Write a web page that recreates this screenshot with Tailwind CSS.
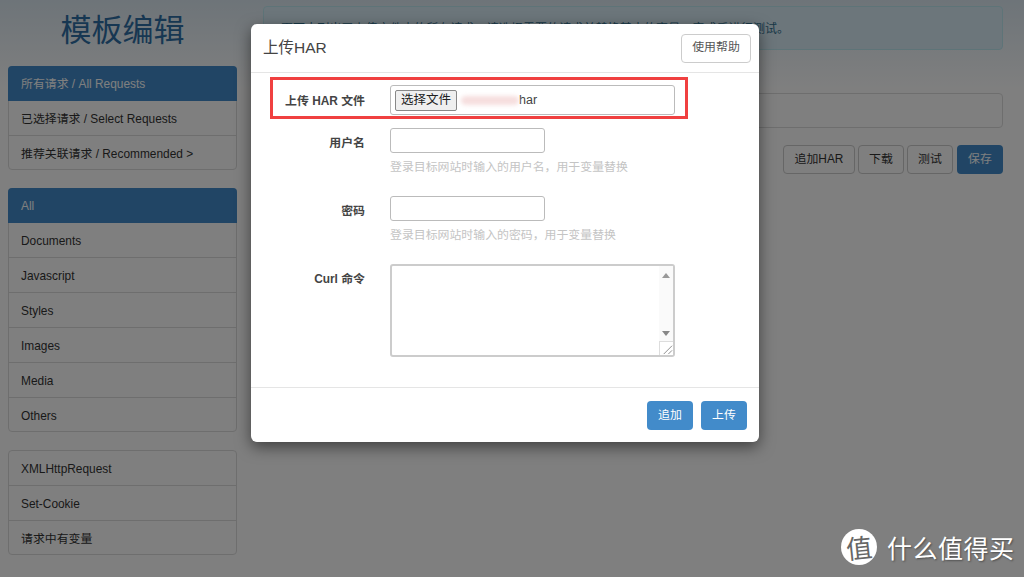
<!DOCTYPE html>
<html lang="zh">
<head>
    <meta charset="UTF-8">
    <title>模板编辑</title>
    <script src="https://cdn.jsdelivr.net/npm/@tailwindcss/browser@4"></script>
</head>
<body class="relative w-[1024px] h-[577px] overflow-hidden bg-white text-[#333] text-[11.9px] font-['Liberation_Sans','Noto_Sans_CJK_SC',sans-serif]">

<!-- page behind the dialog -->
<div class="flex gap-[26px] pl-2 pr-[21px] h-full bg-gradient-to-b from-[#dce9f2] to-white to-[90px]">
    <div class="w-[229px] shrink-0">
        <h1 class="h-[66px] pt-[9px] text-center text-[31px] leading-[44px] text-[#2f6ea5]">模板编辑</h1>
        <div class="flex flex-col border border-[#ddd] rounded bg-white mb-[18px]">
            <a class="h-[35px] -m-px mb-0 px-[13px] leading-[36px] rounded-t bg-[#428bca] text-white">所有请求 / All Requests</a>
            <a class="h-[35px] px-3 leading-[36px] border-b border-[#ddd]">已选择请求 / Select Requests</a>
            <a class="h-[33px] px-3 leading-[36px]">推荐关联请求 / Recommended &gt;</a>
        </div>
        <div class="flex flex-col border border-[#ddd] rounded bg-white mb-[18px]">
            <a class="h-[35px] -m-px mb-0 px-[13px] leading-[36px] rounded-t bg-[#428bca] text-white">All</a>
            <a class="h-[35px] px-3 leading-[36px] border-b border-[#ddd]">Documents</a>
            <a class="h-[35px] px-3 leading-[36px] border-b border-[#ddd]">Javascript</a>
            <a class="h-[35px] px-3 leading-[36px] border-b border-[#ddd]">Styles</a>
            <a class="h-[35px] px-3 leading-[36px] border-b border-[#ddd]">Images</a>
            <a class="h-[35px] px-3 leading-[36px] border-b border-[#ddd]">Media</a>
            <a class="h-[33px] px-3 leading-[36px]">Others</a>
        </div>
        <div class="flex flex-col border border-[#ddd] rounded bg-white">
            <a class="h-[35px] px-3 leading-[36px] border-b border-[#ddd]">XMLHttpRequest</a>
            <a class="h-[35px] px-3 leading-[36px] border-b border-[#ddd]">Set-Cookie</a>
            <a class="h-[33px] px-3 leading-[36px]">请求中有变量</a>
        </div>
    </div>
    <div class="flex-1 pt-[6px]">
        <div class="h-11 pl-[17px] border border-[#bce8f1] rounded bg-[#d9edf7] text-[#31708f] text-xs tracking-[0.1px] leading-[44px] whitespace-nowrap">页面中列出了上传文件内的所有请求，请选择需要的请求并替换其中的变量，完成后进行测试。</div>
        <div class="h-[35px] mt-[43px] border border-[#ddd] rounded bg-white"></div>
        <div class="flex justify-end gap-[3px] mt-[17px]">
            <button class="h-[29px] w-[72px] border border-[#ccc] rounded bg-white">追加HAR</button>
            <button class="h-[29px] w-[46px] border border-[#ccc] rounded bg-white">下载</button>
            <button class="h-[29px] w-[46px] border border-[#ccc] rounded bg-white">测试</button>
            <button class="h-[29px] w-[46px] ml-px rounded bg-[#428bca] text-white">保存</button>
        </div>
    </div>
</div>

<!-- backdrop -->
<div class="absolute inset-0 bg-[rgba(0,0,0,0.5)]"></div>

<!-- modal -->
<div class="absolute left-[251px] top-[24px] w-[508px] h-[418px] flex flex-col bg-white rounded-md shadow-[0_5px_15px_rgba(0,0,0,0.5)]">
    <div class="h-[49px] shrink-0 flex items-center justify-between pl-3 pr-2 border-b border-[#e5e5e5]">
        <h4 class="text-[15.5px] text-[#444]">上传HAR</h4>
        <button class="w-[70px] h-[29px] border border-[#ccc] rounded bg-white text-[#555]">使用帮助</button>
    </div>
    <div class="flex-1 relative pt-3 pl-[34px]">
        <div class="flex items-start h-[43px]">
            <label class="w-20 text-right font-bold leading-[32px] whitespace-nowrap text-[#444]">上传 HAR 文件</label>
            <div class="ml-[25px] w-[285px] h-[30px] flex items-center px-1 border border-[#bbb] rounded-[3px] text-[12.5px]">
                <span class="w-[62px] h-[21px] flex items-center justify-center border border-[#888] rounded-[2px] bg-[#efefef] text-[#222]">选择文件</span>
                <span class="w-[58px] h-[9px] ml-[4px] rounded-full bg-[#f6dede] blur-[2px]"></span>
                <span class="text-[#444]">har</span>
            </div>
        </div>
        <div class="flex items-start h-[68px]">
            <label class="w-20 text-right font-bold leading-[30px] text-[#444]">用户名</label>
            <div class="ml-[25px]">
                <div class="w-[155px] h-[25px] border border-[#bbb] rounded-[3px]"></div>
                <p class="mt-[6px] leading-[16px] text-[#c4c4c4]">登录目标网站时输入的用户名，用于变量替换</p>
            </div>
        </div>
        <div class="flex items-start h-[68px]">
            <label class="w-20 text-right font-bold leading-[30px] text-[#444]">密码</label>
            <div class="ml-[25px]">
                <div class="w-[155px] h-[25px] border border-[#bbb] rounded-[3px]"></div>
                <p class="mt-[6px] leading-[16px] text-[#c4c4c4]">登录目标网站时输入的密码，用于变量替换</p>
            </div>
        </div>
        <div class="flex items-start">
            <label class="w-20 text-right font-bold leading-[30px] text-[#444]">Curl 命令</label>
            <div class="relative ml-[25px] w-[285px] h-[93px] border-2 border-[#ccc] rounded-[3px]">
                <div class="absolute right-0 top-0 bottom-0 w-[14px] flex flex-col justify-between items-center pt-[7px] pb-[19px] bg-[#fafafa]">
                    <svg width="8" height="5" viewBox="0 0 8 5"><path d="M4 0 8 5H0z" fill="#999"/></svg>
                    <svg width="8" height="5" viewBox="0 0 8 5"><path d="M0 0H8L4 5z" fill="#888"/></svg>
                </div>
                <svg class="absolute right-0 bottom-0 bg-white border-l border-t border-[#ddd]" width="14" height="14" viewBox="0 0 14 14"><path d="M4 13 13 4M9 13 13 9" stroke="#888" fill="none"/></svg>
            </div>
        </div>
        <!-- annotation drawn over the screenshot -->
        <div class="absolute left-[19px] top-[4px] w-[418px] h-[42px] border-[3px] border-[#f04040]"></div>
    </div>
    <div class="h-[55px] shrink-0 flex items-start justify-end gap-2 pt-[13px] pr-3 border-t border-[#e5e5e5]">
        <button class="w-[46px] h-[29px] rounded bg-[#428bca] text-white">追加</button>
        <button class="w-[46px] h-[29px] rounded bg-[#428bca] text-white">上传</button>
    </div>
</div>

<!-- watermark -->
<div class="absolute left-[841px] top-[529px] flex items-center gap-[10px] text-white">
    <span class="w-9 h-9 flex items-center justify-center rounded-full bg-white text-[#666] text-[26px] leading-none font-['Noto_Sans_CJK_SC',sans-serif]"><span class="-rotate-6">值</span></span>
    <span class="text-[25px] leading-9 tracking-[0.5px] font-['Noto_Sans_CJK_SC',sans-serif] [text-shadow:1px_1px_2px_rgba(0,0,0,0.4)]">什么值得买</span>
</div>

</body>
</html>
